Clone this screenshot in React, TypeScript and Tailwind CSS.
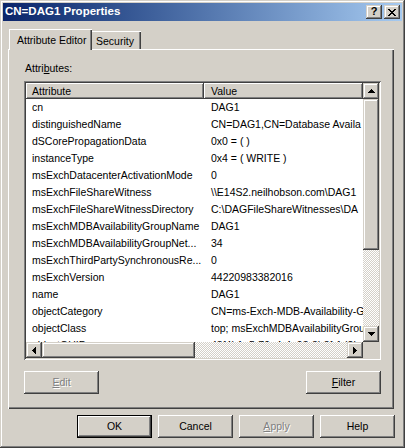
import React from 'react'

const raised =
  'shadow-[inset_-1px_-1px_#404040,inset_1px_1px_#fff,inset_-2px_-2px_#808080,inset_2px_2px_#d4d0c8]'
const scrollBevel =
  'shadow-[inset_-1px_-1px_#404040,inset_1px_1px_#d4d0c8,inset_-2px_-2px_#808080,inset_2px_2px_#fff]'
const hatch = 'bg-[repeating-conic-gradient(#fff_0_25%,#d4d0c8_0_50%)] bg-size-[2px_2px]'

// values are cut where the list view's visible area ends
const rows: [string, string][] = [
  ['cn', 'DAG1'],
  ['distinguishedName', 'CN=DAG1,CN=Database Availa'],
  ['dSCorePropagationData', '0x0 = ( )'],
  ['instanceType', '0x4 = ( WRITE )'],
  ['msExchDatacenterActivationMode', '0'],
  ['msExchFileShareWitness', '\\\\E14S2.neilhobson.com\\DAG1'],
  ['msExchFileShareWitnessDirectory', 'C:\\DAGFileShareWitnesses\\DA'],
  ['msExchMDBAvailabilityGroupName', 'DAG1'],
  ['msExchMDBAvailabilityGroupNet...', '34'],
  ['msExchThirdPartySynchronousRe...', '0'],
  ['msExchVersion', '44220983382016'],
  ['name', 'DAG1'],
  ['objectCategory', 'CN=ms-Exch-MDB-Availability-Gr'],
  ['objectClass', 'top; msExchMDBAvailabilityGrou'],
  ['objectGUID', '48f4b1a5-79e4-4a93-8b8f-1d2b'],
]

const arrows = {
  up: { w: 7, h: 4, d: 'M3 0h1v1h-1z M2 1h3v1h-3z M1 2h5v1h-5z M0 3h7v1h-7z' },
  down: { w: 7, h: 4, d: 'M0 0h7v1h-7z M1 1h5v1h-5z M2 2h3v1h-3z M3 3h1v1h-1z' },
  left: { w: 4, h: 7, d: 'M0 3h1v1h-1z M1 2h1v3h-1z M2 1h1v5h-1z M3 0h1v7h-1z' },
  right: { w: 4, h: 7, d: 'M3 3h1v1h-1z M2 2h1v3h-1z M1 1h1v5h-1z M0 0h1v7h-1z' },
}

function ScrollButton({ dir }: { dir: keyof typeof arrows }) {
  const a = arrows[dir]
  return (
    <div className={`w-[16px] h-[16px] shrink-0 bg-[#d4d0c8] flex items-center justify-center ${scrollBevel}`}>
      <svg width={a.w} height={a.h} viewBox={`0 0 ${a.w} ${a.h}`} shapeRendering="crispEdges">
        <path d={a.d} fill="#000" />
      </svg>
    </div>
  )
}

function Button({ children, disabled, isDefault }: { children: React.ReactNode; disabled?: boolean; isDefault?: boolean }) {
  return (
    <button
      type="button"
      className={
        'w-[75px] h-[23px] bg-[#d4d0c8] flex items-center justify-center text-[10.5px] ' +
        (isDefault
          ? 'shadow-[inset_0_0_0_1px_#000,inset_-2px_-2px_#404040,inset_2px_2px_#fff,inset_-3px_-3px_#808080]'
          : raised) +
        (disabled ? ' text-[#808080] [text-shadow:1px_1px_0_#fff]' : ' text-black')
      }
    >
      {children}
    </button>
  )
}

export default function App() {
  return (
    <div className="w-[405px] h-[448px] bg-[#d4d0c8] p-[3px] font-['Liberation_Sans',Arial,sans-serif] text-[10.5px] text-black shadow-[inset_-1px_-1px_#404040,inset_1px_1px_#d4d0c8,inset_-2px_-2px_#808080,inset_2px_2px_#fff] select-none">
      {/* Title bar */}
      <div className="h-[18px] flex items-center justify-between pl-[2px] pr-[2px] bg-gradient-to-r from-[#0a246a] to-[#a6caf0]">
        <span className="text-white font-bold text-[11.5px] leading-none">CN=DAG1 Properties</span>
        <div className="flex gap-[2px]">
          <div className={`w-[16px] h-[14px] bg-[#d4d0c8] flex items-center justify-center ${scrollBevel}`}>
            <span className="font-bold text-[11px] leading-none -mt-px">?</span>
          </div>
          <div className={`w-[16px] h-[14px] bg-[#d4d0c8] flex items-center justify-center ${scrollBevel}`}>
            <svg width="8" height="7" viewBox="0 0 8 7" shapeRendering="crispEdges">
              <path
                d="M0 0h2v1h-2z M6 0h2v1h-2z M1 1h2v1h-2z M5 1h2v1h-2z M2 2h4v1h-4z M3 3h2v1h-2z M2 4h4v1h-4z M1 5h2v1h-2z M5 5h2v1h-2z M0 6h2v1h-2z M6 6h2v1h-2z"
                fill="#000"
              />
            </svg>
          </div>
        </div>
      </div>

      {/* Tabs */}
      <div className="flex items-end h-[20px] mt-[8px] ml-[6px]">
        <div className="relative z-10 h-[21px] -mb-px w-[83px] bg-[#d4d0c8] flex items-start pt-[6px] pl-[8px] leading-none shadow-[inset_1px_1px_#fff,inset_-1px_0_#404040,inset_-2px_0_#808080]">
          Attribute Editor
        </div>
        <div className="h-[18px] w-[49px] flex items-start pt-[5px] pl-[4px] leading-none shadow-[inset_0_1px_#fff,inset_-1px_0_#404040,inset_-2px_0_#808080]">
          Security
        </div>
      </div>

      {/* Tab panel */}
      <div className="ml-[5px] w-[386px] h-[360px] pt-[13px] pl-[16px] shadow-[inset_1px_1px_#fff,inset_-1px_-1px_#404040,inset_-2px_-2px_#808080]">
        <div className="h-[13px] leading-[13px] pl-[1px]">
          Attri<span className="underline underline-offset-[1px]">b</span>utes:
        </div>

        {/* List view */}
        <div className="mt-[6px] w-[357px] h-[279px] p-[2px] bg-white shadow-[inset_1px_1px_#808080,inset_-1px_-1px_#fff,inset_2px_2px_#404040,inset_-2px_-2px_#d4d0c8] flex flex-col">
          <div className="flex h-[259px]">
            <div className="flex-1 min-w-0 overflow-hidden">
              <div className="flex h-[16px] bg-[#d4d0c8]">
                <div className={`w-[178px] shrink-0 pl-[6px] leading-[16px] ${raised}`}>Attribute</div>
                <div className={`flex-1 pl-[7px] leading-[16px] ${raised}`}>Value</div>
              </div>
              {rows.map(([attr, value]) => (
                <div key={attr} className="flex h-[17px] leading-[17px] whitespace-nowrap">
                  <div className="w-[178px] shrink-0 pl-[6px] overflow-hidden">{attr}</div>
                  <div className="flex-1 min-w-0 pl-[7px] overflow-hidden">{value}</div>
                </div>
              ))}
            </div>
            <div className="w-[16px] flex flex-col">
              <ScrollButton dir="up" />
              <div className={`h-[151px] bg-[#d4d0c8] ${scrollBevel}`} />
              <div className={`flex-1 ${hatch}`} />
              <ScrollButton dir="down" />
            </div>
          </div>
          <div className="flex h-[16px]">
            <ScrollButton dir="left" />
            <div className={`w-[153px] bg-[#d4d0c8] ${scrollBevel}`} />
            <div className={`flex-1 ${hatch}`} />
            <ScrollButton dir="right" />
            <div className="w-[16px] bg-[#d4d0c8]" />
          </div>
        </div>

        <div className="mt-[11px] w-[357px] flex justify-between">
          <Button disabled>
            <span className="underline underline-offset-[1px]">E</span>dit
          </Button>
          <Button>
            <span className="underline underline-offset-[1px]">F</span>ilter
          </Button>
        </div>
      </div>

      {/* Dialog buttons */}
      <div className="mt-[6px] flex justify-end gap-[6px] pr-[7px]">
        <Button isDefault>OK</Button>
        <Button>Cancel</Button>
        <Button disabled>
          <span className="underline underline-offset-[1px]">A</span>pply
        </Button>
        <Button>Help</Button>
      </div>
    </div>
  )
}
